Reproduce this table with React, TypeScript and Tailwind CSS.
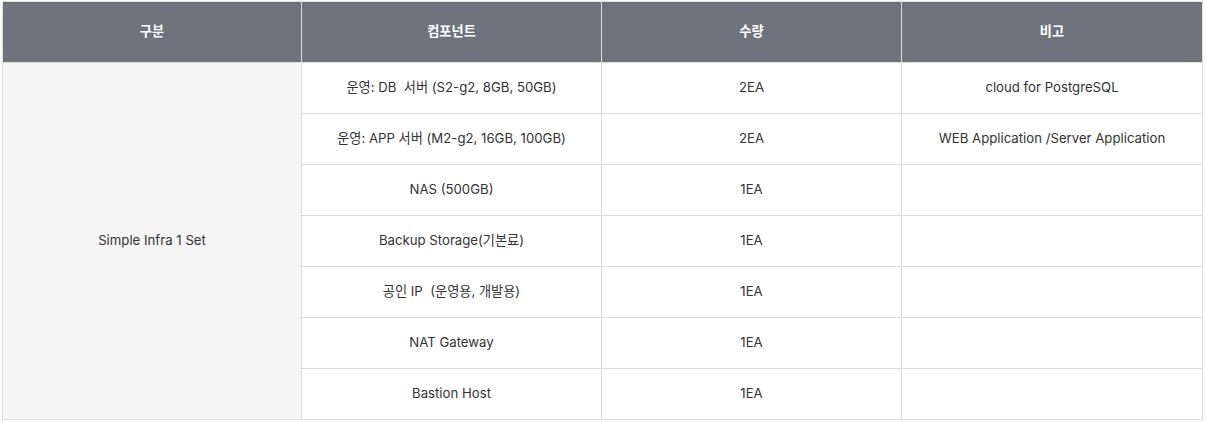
const rows = [
  { name: '운영: DB  서버 (S2-g2, 8GB, 50GB)', qty: '2EA', note: 'cloud for PostgreSQL' },
  { name: '운영: APP 서버 (M2-g2, 16GB, 100GB)', qty: '2EA', note: 'WEB Application /Server Application' },
  { name: 'NAS (500GB)', qty: '1EA', note: '' },
  { name: 'Backup Storage(기본료)', qty: '1EA', note: '' },
  { name: '공인 IP  (운영용, 개발용)', qty: '1EA', note: '' },
  { name: 'NAT Gateway', qty: '1EA', note: '' },
  { name: 'Bastion Host', qty: '1EA', note: '' },
];

export default function App() {
  return (
    <div className="bg-white w-[1206px] h-[422px] pt-[1px] pl-[2px] font-['Inter','Noto_Sans_CJK_KR',sans-serif] text-[13.2px] text-[#333]">
      <table className="w-[1200px] table-fixed border-collapse text-center">
        <colgroup>
          <col className="w-[299px]" />
          <col className="w-[300px]" />
          <col className="w-[300px]" />
          <col className="w-[301px]" />
        </colgroup>
        <thead>
          <tr className="h-[61px] bg-[#6f737e] text-white">
            <th className="border border-[#dcdcdc] font-semibold">구분</th>
            <th className="border border-[#dcdcdc] font-semibold">컴포넌트</th>
            <th className="border border-[#dcdcdc] font-semibold">수량</th>
            <th className="border border-[#dcdcdc] font-semibold">비고</th>
          </tr>
        </thead>
        <tbody>
          {rows.map((r, i) => (
            <tr key={i} className="h-[51px]">
              {i === 0 && (
                <td rowSpan={7} className="border border-[#dcdcdc] bg-[#f5f5f5]">
                  Simple Infra 1 Set
                </td>
              )}
              <td className="border border-[#dcdcdc] whitespace-pre">{r.name}</td>
              <td className="border border-[#dcdcdc]">{r.qty}</td>
              <td className="border border-[#dcdcdc]">{r.note}</td>
            </tr>
          ))}
        </tbody>
      </table>
    </div>
  );
}
